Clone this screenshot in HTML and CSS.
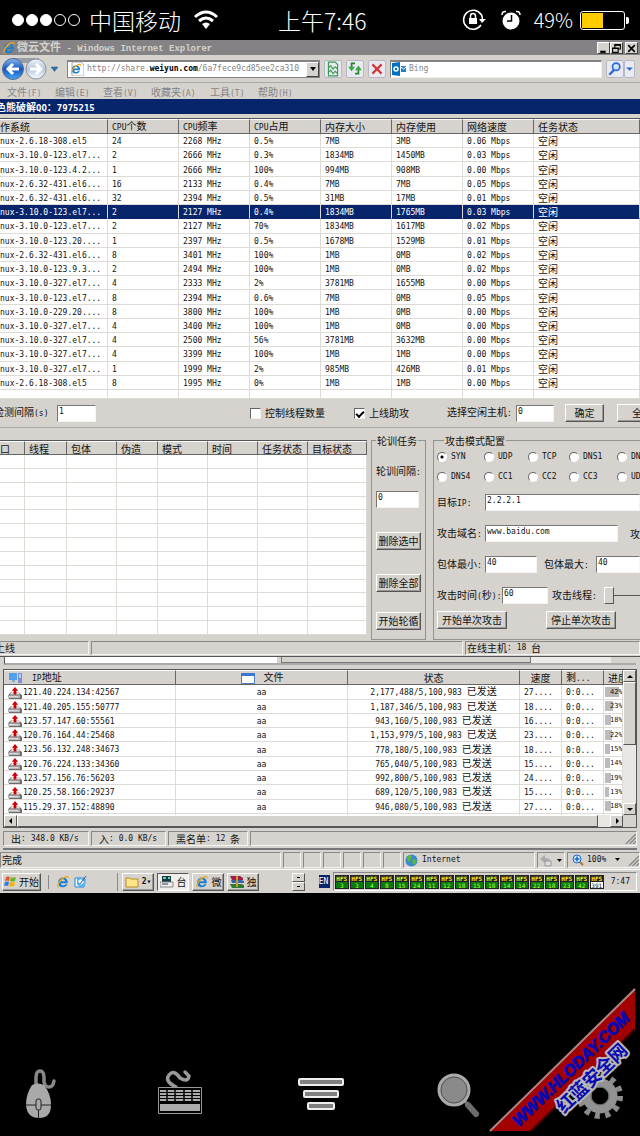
FILE: index.html
```html
<!DOCTYPE html>
<html lang="zh-CN">
<head>
<meta charset="utf-8">
<meta name="viewport" content="width=device-width">
<title>微云文件 - Windows Internet Explorer</title>
<link rel="stylesheet" href="styles.css">
</head>
<body>
<svg width="0" height="0" class="defs" aria-hidden="true">
  <symbol id="ie" viewBox="0 0 16 16">
    <path d="M13.500 9.500H5.600c.2 3 4.200 3.200 5 1.200h2.500C11 16 2.200 15 2.400 8.500 2.600 1 14.200 1 13.500 9.500zM5.700 7.200h4.800C10 4.300 6.100 4.400 5.700 7.200z" fill="#1c7fd6"/>
    <path d="M3.500 15C-1.500 14.500 3.500 3.500 10.500 1.500c4-1.200 5 .8 3.200 4C14.300 2 12 2 9 4 4 7.500 1 13.500 3.500 15z" fill="#e9a91c"/>
  </symbol>
  <symbol id="upload" viewBox="0 0 15 13">
    <path d="M0 9l3-3h9l3 3v4H1z" fill="#666"/><path d="M2 8l2-2h8l1 2z" fill="#e5e5e5"/><path d="M0 9h13v3H0z" fill="#b4b4b4"/><path d="M1 10h10v1H1z" fill="#e4e4e4"/>
    <path d="M7.500 0l3.500 4H9v4H6V4H4z" fill="#d00008"/>
  </symbol>
  <symbol id="grip" viewBox="0 0 12 12">
    <path d="M1 12L12 1M5 12l7-7M9 12l3-3" stroke="#888" stroke-width="1.500"/>
  </symbol>
</svg>

<header class="phone">
  <span class="signal"><i class="on"></i><i class="on"></i><i class="on"></i><i></i><i></i></span>
  <span class="carrier">中国移动</span>
  <svg class="wifi" width="26" height="20" viewBox="0 0 26 20"><g fill="none" stroke="#fff" stroke-width="3"><path d="M2 7Q13-3 24 7"/><path d="M6 11Q13 5 20 11"/></g><path d="M9 14q4-3 8 0l-4 5z" fill="#fff"/></svg>
  <span class="clock">上午7:46</span>
  <svg class="lock" width="24" height="22" viewBox="0 0 24 22"><path d="M19 5.500A9.500 9.500 0 1 0 19 16M19 5Q21 8 20 12" fill="none" stroke="#fff" stroke-width="1.500"/><path d="M17 10h7l-4 4z" fill="#fff"/><rect x="7" y="9" width="8" height="6" fill="#fff"/><path d="M8.500 9V7a2.500 2.500 0 0 1 5 0v2" fill="none" stroke="#fff" stroke-width="1.500"/></svg>
  <svg class="alarm" width="20" height="20" viewBox="0 0 20 20"><circle cx="10" cy="11" r="8.500" fill="#fff"/><path d="M1 5Q1 1 5 1.500M19 5Q19 1 15 1.500" stroke="#fff" stroke-width="1.500" fill="none"/><path d="M10.500 5v6H6" fill="none" stroke="#000" stroke-width="1.500"/></svg>
  <span class="percent">49%</span>
  <span class="battery"><i></i></span>
</header>

<main class="desktop">
  <div class="titlebar">
    <svg width="14" height="14"><use href="#ie"/></svg>
    <span class="caption">微云文件<i class="n"> - Windows Internet Explorer</i></span>
    <span class="winbtns">
      <button aria-label="最小化"><svg viewBox="0 0 10 10"><path d="M2 8h5" stroke="#000" stroke-width="2"/></svg></button>
      <button aria-label="还原"><svg viewBox="0 0 10 10"><path d="M3.500 4V1.500h5v4H7M1.500 4.500h5v4h-5z" stroke="#000" fill="none"/><path d="M3 2h6M1 5h6" stroke="#000"/></svg></button>
      <button class="close" aria-label="关闭"><svg viewBox="0 0 10 10"><path d="M2 2l6 6M8 2L2 8" stroke="#000" stroke-width="1.500"/></svg></button>
    </span>
  </div>

  <div class="toolbar">
    <svg class="nav" width="60" height="24" viewBox="0 0 60 24">
      <defs><linearGradient id="bl" x2="0" y2="1"><stop stop-color="#8ab8f0"/><stop offset=".5" stop-color="#1456bd"/><stop offset="1" stop-color="#47a9f5"/></linearGradient><linearGradient id="gl" x2="0" y2="1"><stop stop-color="#eef4fb"/><stop offset=".5" stop-color="#b8c8dc"/><stop offset="1" stop-color="#f5faff"/></linearGradient></defs>
      <path d="M11 1h26v5H11z" fill="#9a9ea6"/>
      <circle cx="11" cy="12" r="10.500" fill="url(#bl)" stroke="#526b91"/><circle cx="34" cy="12" r="10" fill="url(#gl)" stroke="#8a94a2"/>
      <path d="M17 12H6M11 7l-5 5 5 5" stroke="#fff" stroke-width="3" fill="none"/><path d="M28 12h11M34 7l5 5-5 5" stroke="#fff" stroke-width="3" fill="none"/>
      <path d="M49 10h7l-3.500 4.500z" fill="#2876b8" stroke="#32567a" stroke-width=".5"/>
    </svg>
    <div class="address">
      <svg width="14" height="14"><path d="M2 0h9l3 3v11H2z" fill="#fff" stroke="#aaa"/><use href="#ie" width="12" height="12" y="1"/></svg>
      <span class="n url">http://share.<b>weiyun.com</b>/6a7fece9cd85ee2ca310</span>
      <button class="drop" aria-label="地址列表"><svg viewBox="0 0 8 8"><path d="M1 2h6L4 6z"/></svg></button>
    </div>
    <button class="tool" aria-label="兼容性视图"><svg viewBox="0 0 14 14"><path d="M3 1h6l2 2v10H3zM3 6l2-2 2 3 2-2 2 2M3 10l2-2 2 3 2-2 2 2" fill="none" stroke="#3b9a4c"/></svg></button>
    <button class="tool" aria-label="刷新"><svg viewBox="0 0 14 14"><path d="M7 2H4v5M7 11h3V6" fill="none" stroke="#21872e" stroke-width="1.500"/><path d="M1 5h6L4 9zM7 8h6l-3-4z" fill="#3aa648"/></svg></button>
    <button class="tool" aria-label="停止"><svg viewBox="0 0 14 14"><path d="M3 3l8 8M11 3l-8 8" stroke="#cf3a3a" stroke-width="2"/></svg></button>
    <label class="search"><svg width="15" height="14" viewBox="0 0 15 14"><path d="M0 1l8-1v14l-8-1z" fill="#0072c6"/><circle cx="4" cy="7" r="2" fill="none" stroke="#fff" stroke-width="1.500"/><path d="M9 4h5v6H9z" fill="#1d7fce"/><path d="M9 5l2.500 2L14 5" fill="none" stroke="#fff"/></svg><input class="n" type="text" value="Bing" aria-label="搜索"></label>
    <button class="tool go" aria-label="搜索"><svg viewBox="0 0 14 14"><circle cx="8" cy="5" r="3.200" fill="#cfe6ff" stroke="#2a67d8" stroke-width="1.500"/><path d="M6 8l-4 4" stroke="#2a67d8" stroke-width="2"/></svg></button>
    <button class="tool more" aria-label="搜索选项"><svg viewBox="0 0 8 8"><path d="M1 3h6L4 6z" fill="#2a67d8"/></svg></button>
  </div>

  <nav class="menu">
    <a href="#">文件<i class="n">(F)</i></a><a href="#">编辑<i class="n">(E)</i></a><a href="#">查看<i class="n">(V)</i></a><a class="wide" href="#">收藏夹<i class="n">(A)</i></a><a href="#">工具<i class="n">(T)</i></a><a href="#">帮助<i class="n">(H)</i></a>
  </nav>

  <h1 class="apptitle">色熊破解<i class="n">QQ</i>：<i class="n">7975215</i></h1>

  <div class="hosts-wrap">
    <table class="grid hosts">
      <colgroup><col class="w108"><col class="w71"><col class="w71"><col class="w71"><col class="w71"><col class="w71"><col class="w71"><col></colgroup>
      <thead><tr><th>作系统</th><th><i class="n">CPU</i>个数</th><th><i class="n">CPU</i>频率</th><th><i class="n">CPU</i>占用</th><th>内存大小</th><th>内存使用</th><th>网络速度</th><th>任务状态</th></tr></thead>
      <tbody id="hosts"></tbody>
    </table>
  </div>

  <div class="options">
    <label for="gap">检测间隔<i class="n">(s)</i></label>
    <span><input id="gap" class="box gap" type="text" value="1"></span>
    <label class="check"><input type="checkbox">控制线程数量</label>
    <label class="check"><input type="checkbox" checked>上线助攻</label>
    <label for="idle">选择空闲主机<i class="n">:</i></label>
    <span><input id="idle" class="box idle" type="text" value="0"></span>
    <span><button class="btn ok">确定</button></span>
    <button class="btn all">全</button>
  </div>

  <div class="work">
    <table class="grid tasks">
      <colgroup><col class="w25"><col class="w42"><col class="w50"><col class="w41"><col class="w50"><col class="w50"><col class="w50"><col></colgroup>
      <thead><tr><th>口</th><th>线程</th><th>包体</th><th>伪造</th><th>模式</th><th>时间</th><th>任务状态</th><th>目标状态</th></tr></thead>
      <tbody id="tasks"></tbody>
    </table>
    <fieldset class="rotate">
      <legend>轮训任务</legend>
      <label for="rot">轮训间隔<i class="n">:</i></label>
      <input id="rot" class="box" type="text" value="0">
      <button class="btn">删除选中</button>
      <button class="btn">删除全部</button>
      <button class="btn">开始轮循</button>
    </fieldset>
    <fieldset class="attack">
      <legend>攻击模式配置</legend>
      <div class="radios n">
        <label><input type="radio" name="m" checked>SYN</label><label><input type="radio" name="m">UDP</label><label><input type="radio" name="m">TCP</label><label><input type="radio" name="m">DNS1</label><label><input type="radio" name="m">DN</label>
        <label><input type="radio" name="m">DNS4</label><label><input type="radio" name="m">CC1</label><label><input type="radio" name="m">CC2</label><label><input type="radio" name="m">CC3</label><label><input type="radio" name="m">UD</label>
      </div>
      <div class="line"><label for="ip">目标<i class="n">IP:</i></label><input id="ip" class="box fill" type="text" value="2.2.2.1"></div>
      <div class="line"><label for="dom">攻击域名<i class="n">:</i></label><input id="dom" class="box domain" type="text" value="www.baidu.com"><span>攻</span></div>
      <div class="line"><label for="min">包体最小<i class="n">:</i></label><input id="min" class="box min" type="text" value="40"><label class="second" for="max">包体最大<i class="n">:</i></label><input id="max" class="box fill" type="text" value="40"></div>
      <div class="line"><label class="long" for="sec">攻击时间<i class="n">(</i>秒<i class="n">):</i></label><input id="sec" class="box sec" type="text" value="60"><label class="second" for="thr">攻击线程<i class="n">:</i></label><input id="thr" type="range" value="0"></div>
      <div class="actions"><button class="btn">开始单次攻击</button><button class="btn">停止单次攻击</button></div>
    </fieldset>
  </div>

  <div class="status app-status"><span>上线</span><span></span><span>在线主机<i class="n">: 18 </i>台</span></div>

  <div class="behind"><i class="page"></i><i class="thumb"></i><i class="track"></i></div>

  <section class="transfers">
    <div class="list">
      <div class="clip">
        <table class="grid files">
          <colgroup><col class="w172"><col class="w172"><col class="w172"><col class="w42"><col class="w42"><col></colgroup>
          <thead><tr>
            <th class="ip"><svg width="14" height="12" viewBox="0 0 14 12"><path d="M0 1h8v7H0z" fill="#50a0f0"/><path d="M3 8h3v2H3z" fill="#8ab"/><path d="M1 10h7v1H1z" fill="#bcd"/><path d="M9 1h4v10H9z" fill="#7d8fd0"/><path d="M10 3h2M10 5h2" stroke="#fff"/></svg><i class="n">IP</i>地址</th>
            <th class="mid"><svg width="14" height="11" viewBox="0 0 14 11"><path d="M.5.500h13v10H.5z" fill="#fff" stroke="#4a7fc0"/><path d="M0 0h14v3H0z" fill="#3878d0"/></svg>文件</th>
            <th class="mid">状态</th><th class="mid">速度</th><th>剩<i class="n">...</i></th><th>进度</th></tr></thead>
          <tbody id="files"></tbody>
        </table>
      </div>
      <div class="vbar"><button class="sb" aria-label="上"><svg viewBox="0 0 8 8"><path d="M1 6h6L4 3z"/></svg></button><i class="thumb"></i><button class="sb" aria-label="下"><svg viewBox="0 0 8 8"><path d="M1 3h6L4 6z"/></svg></button></div>
      <div class="hbar"><button class="sb" aria-label="左"><svg viewBox="0 0 8 8"><path d="M5 1v6L2 4z"/></svg></button><i class="thumb"></i><button class="sb" aria-label="右"><svg viewBox="0 0 8 8"><path d="M3 1v6l3-3z"/></svg></button></div>
    </div>
    <div class="status list-status"><span>出<i class="n">: 348.0 KB/s</i></span><span>入<i class="n">: 0.0 KB/s</i></span><span>黑名单<i class="n">: 12 </i>条</span><span><svg class="grip" width="11" height="11"><use href="#grip"/></svg></span></div>
  </section>

  <div class="status ie-status">
    <span>完成</span><span></span><span></span><span></span><span></span><span></span><span></span>
    <span class="zone"><svg width="13" height="13" viewBox="0 0 13 13"><circle cx="6.500" cy="6.500" r="6" fill="#3987d5"/><path d="M2 3q3-3 5-1L6 6 3 8zM8 5l4 1-2 5-3-2z" fill="#5cb83c"/></svg><i class="n">Internet</i></span>
    <span class="safe"><svg width="24" height="13" viewBox="0 0 24 13"><path d="M1 5l5-4v3q5 0 6 5H9Q8 7 6 7v2z" fill="#aaa"/><path d="M6 7h6v5H6z" fill="#ddd" stroke="#999"/><path d="M18 5h5l-2.500 3z"/></svg></span>
    <span class="scale"><svg width="12" height="12" viewBox="0 0 12 12"><path d="M7 7l4 4" stroke="#a87832" stroke-width="2"/><circle cx="5" cy="5" r="4" fill="#cfe8ff" stroke="#1d6ac8"/><path d="M5 2.500v5M2.500 5h5" stroke="#1d6ac8" stroke-width="1.500"/></svg><i class="n">100%</i><svg class="caret" width="6" height="4"><path d="M0 0h5L2.500 3z"/></svg><svg class="grip" width="11" height="11"><use href="#grip"/></svg></span>
  </div>

  <footer class="taskbar">
    <button class="btn start"><svg width="13" height="12" viewBox="0 0 13 12"><path d="M2 1q2-1 4 0L5 5Q3 4 1 5z" fill="#e8532a"/><path d="M7 1q2 1 5 0l-1 4q-2 1-5 0z" fill="#6db52c"/><path d="M1 6q2-1 4 0l-1 4q-2-1-4 0z" fill="#2b7be0"/><path d="M6 6q2 1 5 0l-1 4q-2 1-5 0z" fill="#f3b60c"/></svg>开始</button>
    <div class="quick"><svg width="14" height="14"><use href="#ie"/></svg><svg width="14" height="14" viewBox="0 0 14 14"><path d="M1 3h9v9H1z" fill="#eaf5ff" stroke="#2888d8"/><path d="M3 2l4 1 5 1-1 7-5 2-3-4z" fill="#58b0ee"/><path d="M4 6l3-2 3 3-3 3z" fill="#fff"/><path d="M12 1L6 9" stroke="#2060a8"/></svg></div>
    <div class="tasksbtns">
      <button class="btn"><svg width="14" height="12" viewBox="0 0 14 12"><path d="M1 2h4l1 1h7v8H1z" fill="#ffe58a" stroke="#b58a22"/></svg><i class="n">2▾</i></button>
      <button class="btn pressed"><svg width="14" height="13" viewBox="0 0 14 13"><path d="M2 1h9v6H2z" fill="#123b40"/><path d="M3 2h3v2H3zM8 2h2v2H8z" fill="#6fc6bb"/><path d="M0 7h13v5H0z" fill="#eee" stroke="#888"/><path d="M2 9h6" stroke="#246"/></svg>台</button>
      <button class="btn"><svg width="14" height="14"><use href="#ie"/></svg>微</button>
      <button class="btn"><svg width="14" height="13" viewBox="0 0 14 13"><path d="M0 1h10l3 2v2H2z" fill="#9b1f46"/><path d="M1 5h10l3 1v2H2z" fill="#3366b0"/><path d="M0 9h11l3 1v3H2z" fill="#2d7a35"/><path d="M6 1h2v11H6z" fill="#c99a2e"/></svg>独</button>
    </div>
    <div class="spin"><button aria-label="上一组"></button><button aria-label="下一组"></button></div>
    <span class="lang n">EN</span>
    <div class="tray n"><span id="tray"></span><time>7:47</time></div>
  </footer>
</main>

<nav class="dock">
  <button aria-label="鼠标"><svg viewBox="0 0 44 60"><path d="M18 26V17q0-7 4-7t4 7v4q1 5 5 5t5-6" fill="none" stroke="#888" stroke-width="3.500" stroke-linecap="round"/><path d="M14 24q6-3 12 0 7 9 7 20 0 13-12 13T8 44q0-11 6-20z" fill="#a9a9a9"/><path d="M8 44h25M20.500 48v9" stroke="#222"/><rect x="18" y="38" width="5" height="11" rx="2" fill="#a9a9a9" stroke="#222"/></svg></button>
  <button aria-label="键盘"><svg viewBox="0 0 44 60"><path d="M18 26Q6 20 11 14T22 17Q30 22 31 15L27 11" fill="none" stroke="#999" stroke-width="3.500" stroke-linecap="round"/><path d="M.5 26.500h43v26H.5z" fill="#000" stroke="#999"/><path d="M2 30h40M2 33h40M2 36h40M2 39h40" stroke="#aaa" stroke-width="2.200"/><path d="M9 28v13M17 28v13M26 28v13M34 28v13" stroke="#000" stroke-width="1.500"/><path d="M2 43h40v7H2z" fill="#aaa"/></svg></button>
  <button aria-label="菜单"><svg viewBox="0 0 44 60"><g fill="#808080" stroke="#eee" stroke-width="2"><rect x="1" y="18" width="44" height="6" rx="1"/><rect x="6" y="30" width="34" height="6" rx="1"/><rect x="10" y="42" width="26" height="6" rx="1"/></g></svg></button>
  <button aria-label="搜索"><svg viewBox="0 0 44 60"><path d="M26 40l4 3" stroke="#777" stroke-width="3"/><path d="M30 44l8 9" stroke="#6d6d6d" stroke-width="6" stroke-linecap="round"/><circle cx="16" cy="29" r="15" fill="#8a8a8a" stroke="#aaa" stroke-width="3"/><circle cx="16" cy="29" r="13" fill="none" stroke="#555"/></svg></button>
  <button aria-label="设置"><svg viewBox="0 0 44 60"><circle cx="22" cy="35" r="20" fill="none" stroke="#8b8b8b" stroke-width="6" stroke-dasharray="5 5.470"/><circle cx="22" cy="35" r="13" fill="none" stroke="#929292" stroke-width="9"/><circle cx="22" cy="35" r="9" fill="none" stroke="#666"/></svg></button>
  <svg class="ribbon" width="151" height="148" viewBox="0 0 151 148">
    <path d="M146 0v42L41 143H0z" fill="#a30000"/><path d="M146 1L1 143" stroke="#a98888" stroke-width="2"/><path d="M146 41L42 143" stroke="#400" stroke-width="2"/>
    <text class="site" transform="translate(30 139) rotate(-44)">WWW.HLODAY.COM</text>
    <text class="brand" transform="translate(75 126) rotate(-44)">红蓝安全网</text>
  </svg>
</nav>
<script src="app.js"></script>
</body>
</html>
```
FILE: styles.css
```css
* { box-sizing: border-box; }
body { margin: 0; min-height: 100vh; display: flex; flex-direction: column; background: #000; color: #111; font: 10px/12px "Noto Sans CJK SC", sans-serif; overflow-x: hidden; }
button, input { font: inherit; color: inherit; padding: 0; margin: 0; border-radius: 0; }
i { font-style: normal; }
svg { display: block; flex: none; }
a { color: inherit; text-decoration: none; }
.defs { position: absolute; }
.n { font-family: "DejaVu Sans Mono", "Noto Sans CJK SC", monospace; font-size: 8px; white-space: pre; }

/* phone status bar */
.phone { height: 40px; display: flex; align-items: center; color: #fff; padding: 0 11px 0 12px; font-size: 23px; line-height: 40px; font-weight: 300; white-space: nowrap; }
.signal { display: flex; gap: 2px; width: 77px; }
.signal i { width: 12px; height: 12px; border: 1px solid #fff; border-radius: 50%; }
.signal .on { background: #fff; }
.wifi { margin-left: 12px; }
.clock { margin: 0 auto 0 59px; font-size: 23px; }
.alarm { margin-left: 15px; }
.percent { margin: 0 7px 0 13px; font-size: 20px; }
.battery { position: relative; width: 45px; height: 19px; margin-right: 4px; border: 1px solid #fff; border-radius: 3px; padding: 1px; }
.battery i { display: block; width: 21px; height: 15px; background: #ffcc00; }
.battery::after { content: ""; position: absolute; right: -5px; top: 5px; width: 3px; height: 7px; background: #fff; border-radius: 0 2px 2px 0; }

/* browser window */
.desktop { background: #d6d3ce; overflow: hidden; }
.titlebar { height: 15px; display: flex; align-items: center; gap: 1px; padding: 0 2px; background: #848284; color: #d6d3ce; font-weight: 700; font-size: 11px; line-height: 15px; }
.titlebar .n { font-family: "Liberation Mono", monospace; font-size: 9px; }
.winbtns { margin-left: auto; display: flex; }
.winbtns button { width: 13px; height: 12px; background: #d6d3ce; border: 1px solid; border-color: #fff #404040 #404040 #fff; }
.winbtns .close { margin-left: 2px; }
.toolbar { height: 28px; display: flex; align-items: center; padding: 0 5px 0 2px; border-bottom: 1px solid #aaa; }
.address { display: flex; align-items: center; width: 253px; height: 18px; margin: 0 4px 0 5px; padding: 0 0 0 2px; background: #fff; border: 1px solid #848284; border-top-width: 2px; color: #848284; }
.url { flex: 1; width: 0; margin-left: 3px; overflow: hidden; }
.url b { color: #000; }
.drop { width: 13px; height: 15px; background: #d6d3ce; border: 1px solid; border-color: #fff #404040 #404040 #fff; }
.drop svg, .sb svg { width: 8px; height: 8px; margin: auto; }
.tool { width: 18px; height: 18px; margin-right: 4px; background: #e9e9f2; border: 1px solid #b8b8c4; border-radius: 2px; }
.search { flex: 1; display: flex; align-items: center; gap: 2px; height: 18px; margin-right: 4px; padding-left: 1px; background: #fff; border: 1px solid #eee; border-top: 2px solid #848284; border-left-color: #848284; color: #848284; }
.search input { flex: 1; width: 0; border: 0; background: none; }
.go { margin-right: 0; }
.more { width: 11px; margin-right: 0; }
.menu { height: 16px; display: flex; padding-left: 7px; color: #848284; line-height: 18px; }
.menu a { width: 48px; white-space: nowrap; }
.menu .wide { width: 59px; }
.apptitle { margin: 0; height: 15px; line-height: 15px; font-size: 10px; color: #fff; background: #08246b; text-indent: -4px; }
.apptitle .n { font-size: 9px; }

/* list views */
.grid { border-collapse: separate; border-spacing: 0; table-layout: fixed; width: 100%; background: #fff; }
.grid th { height: 14px; padding: 0 0 0 4px; background: #d6d3ce; border-top: 1px solid #fff; border-right: 1px solid #666; border-bottom: 1px solid #666; text-align: left; font-weight: 400; line-height: 11px; white-space: nowrap; overflow: hidden; }
.grid td { padding: 0 0 0 4px; border-right: 1px solid #dedbd6; border-bottom: 1px solid #dedbd6; line-height: 11px; white-space: nowrap; overflow: hidden; }
.w25 { width: 25px; } .w41 { width: 41px; } .w42 { width: 42px; } .w50 { width: 50px; }
.w71 { width: 71px; } .w108 { width: 108px; } .w172 { width: 172px; }
.hosts-wrap { padding-top: 4px; }
.hosts { height: 281px; border-top: 1px solid #555; }
.hosts tbody tr:last-child td { height: 9px; line-height: 8px; }
.hosts td:first-child, .hosts th:first-child, .tasks th:first-child { padding-left: 0; }
.hosts .sel td { background: #08246b; color: #fff; border-bottom-color: #08246b; }

.options { height: 29px; display: grid; grid-template-columns: 57px 193px 104px 93px 69px 49px 52px 1fr; align-items: center; border-bottom: 1px solid #aaa; white-space: nowrap; }
.options label:first-child { text-indent: -6px; }
.options span { display: flex; }
.box { height: 17px; padding: 0 0 4px 1px; background: #fff; border: 1px solid; border-color: #777 #f4f4f4 #f4f4f4 #777; font-family: "DejaVu Sans Mono", monospace; font-size: 8px; min-width: 0; }
.gap { width: 39px; }
.idle { width: 38px; }
.btn { height: 18px; padding: 0; background: #d6d3ce; border: 1px solid; border-color: #fff #555 #555 #fff; box-shadow: inset -1px -1px #999; white-space: nowrap; line-height: 14px; }
.ok { width: 39px; }
.all { width: 40px; }
.check { display: flex; align-items: center; gap: 4px; }
.check input { appearance: none; width: 11px; height: 11px; background: #fff; border: 1px solid; border-color: #666 #eee #eee #666; }
.check input:checked::before { content: ""; display: block; width: 6px; height: 3px; margin: 2px 0 0 1px; border: solid #000; border-width: 0 0 2px 2px; transform: rotate(-45deg); }

.work { display: grid; grid-template-columns: 367px 55px 1fr; column-gap: 4px; padding: 6px 0 0; align-items: start; white-space: nowrap; }
.tasks { margin-top: 6px; height: 195px; border-top: 1px solid #555; }
fieldset { margin: 0; min-width: 0; border: 1px solid #929292; }
legend { height: 13px; line-height: 13px; padding: 0 1px; }
.rotate { display: grid; grid-template-rows: 26px 41px 42px 38px 18px; align-content: start; height: 206px; padding: 18px 4px 0; }
.rotate .box { width: 43px; }
.rotate label { height: 14px; }
.attack { height: 206px; padding: 0 0 0 3px; border-right: 0; margin-left: 3px; }
.attack legend { margin-left: 7px; }
.radios { display: grid; grid-template-columns: 47px 44px 41px 48px 1fr; grid-auto-rows: 20px; align-items: center; }
.radios label { display: flex; align-items: center; gap: 4px; }
.radios input { appearance: none; flex: none; width: 10px; height: 10px; border-radius: 50%; border: 1px solid; border-color: #666 #fff #fff #666; background: #fff; }
.radios input:checked { background: radial-gradient(#000 0 1px, #fff 2px); }
.line { display: flex; align-items: center; height: 31px; }
.line > label { width: 48px; }
.line .long { width: 65px; }
.line .second { width: 52px; }
.line span { margin-left: 12px; }
.line .fill { flex: 1; width: 0; }
.domain { width: 133px; }
.min { width: 52px; margin-right: 7px; }
.sec { width: 46px; margin-right: 4px; }
.line input[type=range] { appearance: none; flex: 1; width: 0; height: 17px; background: linear-gradient(#555, #555) 0 50% / 100% 1px no-repeat; }
.line input[type=range]::-webkit-slider-thumb { appearance: none; width: 10px; height: 17px; background: #d6d3ce; border: 1px solid; border-color: #fff #555 #555 #fff; }
.actions { display: flex; gap: 39px; }
.actions .btn { width: 70px; }

.status { display: grid; column-gap: 2px; height: 17px; padding: 1px 0; align-items: stretch; white-space: nowrap; }
.status > span { display: flex; align-items: center; border: 1px solid; border-color: #888 #f4f4f4 #f4f4f4 #888; padding-left: 1px; overflow: hidden; }
.status .grip { margin-left: auto; }
.app-status { grid-template-columns: 89px 372px 1fr; border-bottom: 1px solid #555; height: 17px; }
.app-status > span:first-child { border-left: 0; text-indent: -6px; }

.behind { display: flex; height: 8px; margin: 0 4px; border-left: 1px solid #555; border-bottom: 2px solid #aaa; }
.behind .page { width: 272px; background: #fff; }
.behind .thumb { width: 250px; margin-left: 4px; border: 1px solid #777; border-top: 0; }
.behind .track { width: 80px; background: #edebe8; }
.transfers { margin: 4px 3px 0; border-bottom: 2px solid #777; }
.list { display: grid; grid-template-columns: 1fr 13px; border: 1px solid #555; }
.clip { height: 145px; overflow: hidden; background: #fff; }
.files { height: 156px; }
.files .mid { text-align: center; padding: 0; }
.files th svg { display: inline-block; vertical-align: middle; margin: 0 9px 0 1px; }
.files td:first-child { padding-left: 4px; }
.files td svg { display: inline-block; vertical-align: middle; margin-right: 1px; }
.files td:last-child { padding-left: 1px; }
.bar { display: block; height: 10px; padding-left: 5px; line-height: 10px; font-size: 7px; }
.vbar, .hbar { display: flex; background: #e9e7e4; }
.vbar { flex-direction: column; }
.sb { flex: none; width: 13px; height: 12px; background: #d6d3ce; border: 1px solid; border-color: #fff #555 #555 #fff; }
.thumb { background: #d6d3ce; border: 1px solid; border-color: #fff #555 #555 #fff; }
.vbar .thumb { height: 63px; margin-bottom: auto; }
.hbar .thumb { flex: 1; margin-right: 12px; }
.list-status { grid-template-columns: 86px 75px 80px 1fr; height: 20px; padding: 3px 0 2px; }
.list-status > span { padding-left: 7px; }
.ie-status { grid-template-columns: 1fr repeat(6, 18px) 132px 28px 73px; height: 19px; padding: 2px 0 1px; }
.ie-status .zone { gap: 4px; }
.ie-status .scale { gap: 3px; padding-left: 4px; }
.scale .caret { margin-left: 6px; }

.taskbar { height: 24px; display: flex; align-items: center; border-top: 1px solid #fff; padding: 0 3px 0 2px; white-space: nowrap; }
.taskbar .btn { display: flex; align-items: center; justify-content: center; gap: 2px; }
.start { width: 39px; }
.quick { display: flex; gap: 4px; width: 69px; margin-left: 7px; padding-left: 7px; border-left: 1px solid #888; }
.tasksbtns { display: flex; gap: 3px; padding-left: 4px; border-left: 1px solid #888; }
.tasksbtns .btn { width: 32px; gap: 3px; }
.tasksbtns .n { font-weight: 700; }
.tasksbtns .pressed { background: #efeeec; border-color: #555 #fff #fff #555; box-shadow: none; }
.spin { display: grid; margin-left: auto; }
.spin button { width: 13px; height: 9px; background: #d6d3ce; border: 1px solid; border-color: #fff #555 #555 #fff; }
.spin button::before { content: ""; display: block; width: 3px; height: 1px; margin: 0 auto; background: #000; }
.lang { margin: 0 3px 0 14px; width: 11px; height: 13px; line-height: 13px; color: #fff; background: #08246b; }
.tray { display: flex; align-items: center; gap: 7px; height: 19px; padding: 0 6px 0 1px; border: 1px solid; border-color: #888 #fff #fff #888; }
#tray { display: flex; gap: 1px; }
.hfs { display: grid; grid-template-rows: 6px 7px; width: 14px; height: 14px; border: 1px solid #222; background: #087a10; color: #b9ff30; font-size: 6px; line-height: 7px; text-align: center; overflow: hidden; }
.hfs b { background: #222; color: #f4ee20; line-height: 6px; }
.hfs.full { background: #fff; color: #222; }

/* phone toolbar */
.dock { position: relative; display: flex; justify-content: space-between; margin-top: auto; padding: 0 18px 15px; }
.dock button { width: 44px; height: 60px; border: 0; background: none; }
.dock button svg { width: 44px; height: 60px; overflow: visible; }
.ribbon { position: absolute; right: 0; bottom: 0; }
.site { font: italic 700 16px "Liberation Sans", sans-serif; fill: #0a0ab0; stroke: #0a0ab0; }
.brand { font: 700 18px "Noto Sans CJK SC", sans-serif; fill: #0a0ab0; stroke: #b8b8b8; stroke-width: 4px; paint-order: stroke; stroke-linejoin: round; }
```
FILE: app.js
```javascript
const mixed = s => s.replace(/[\x20-\x7e]+/g, m => `<i class="n">${m}</i>`);
const row = (cells, cls = "") => `<tr class="${cls}">${cells.map(c => `<td>${c}</td>`).join("")}</tr>`;

const hosts = `2.6.18-308.el5|24|2268|0.5%|7MB|3MB|0.06
3.10.0-123.el7...|2|2666|0.3%|1834MB|1450MB|0.03
3.10.0-123.4.2...|1|2666|100%|994MB|908MB|0.00
2.6.32-431.el6...|16|2133|0.4%|7MB|7MB|0.05
2.6.32-431.el6...|32|2394|0.5%|31MB|17MB|0.01
3.10.0-123.el7...|2|2127|0.4%|1834MB|1765MB|0.03
3.10.0-123.el7...|2|2127|70%|1834MB|1617MB|0.02
3.10.0-123.20....|1|2397|0.5%|1678MB|1529MB|0.01
2.6.32-431.el6...|8|3401|100%|1MB|0MB|0.02
3.10.0-123.9.3...|2|2494|100%|1MB|0MB|0.02
3.10.0-327.el7...|4|2333|2%|3781MB|1655MB|0.00
3.10.0-123.el7...|8|2394|0.6%|7MB|0MB|0.05
3.10.0-229.20....|8|3800|100%|1MB|0MB|0.00
3.10.0-327.el7...|4|3400|100%|1MB|0MB|0.00
3.10.0-327.el7...|4|2500|56%|3781MB|3632MB|0.00
3.10.0-327.el7...|4|3399|100%|1MB|1MB|0.00
3.10.0-327.el7...|1|1999|2%|985MB|426MB|0.01
2.6.18-308.el5|8|1995|0%|1MB|1MB|0.00`.split("\n").map(l => l.split("|"));

document.getElementById("hosts").innerHTML = hosts.map((h, i) => row([
  "nux-" + h[0], h[1], h[2] + " MHz", h[3], h[4], h[5], h[6] + " Mbps", "空闲"
].map(mixed), i === 5 ? "sel" : "")).join("") + row(Array(8).fill("&nbsp;"));

document.getElementById("tasks").innerHTML = row(Array(8).fill("")).repeat(13);

const files = `121.40.224.134:42567|2,177,488|27|42
121.40.205.155:50777|1,187,346|18|23
123.57.147.60:55561|943,160|16|18
120.76.164.44:25468|1,153,979|23|22
123.56.132.248:34673|778,180|18|15
120.76.224.133:34360|765,040|15|14
123.57.156.76:56203|992,800|24|19
120.25.58.166:29237|689,120|15|13
115.29.37.152:48890|946,080|27|18`.split("\n").map(l => l.split("|"));

const icon = '<svg width="14" height="12"><use href="#upload"/></svg>';
const fileRow = (ip, sent, speed, left, bar) =>
  `<tr><td>${icon}${ip}</td><td class="mid">${sent ? mixed("aa") : ""}</td><td class="mid">${sent}</td><td>${speed}</td><td>${left}</td><td>${bar}</td></tr>`;
document.getElementById("files").innerHTML = files.map(f => fileRow(
  mixed(f[0]), mixed(f[1] + "/5,100,983 已发送"), mixed(f[2] + "...."), mixed("0:0..."),
  `<span class="n bar" style="background:linear-gradient(90deg,#bbb ${Math.round(f[3] / 3)}px,#fff 0)">${f[3]}%</span>`
)).join("") + fileRow("", "", "", "", "");

document.getElementById("tray").innerHTML =
  [3, 3, 4, 8, 15, 24, 11, 12, 18, 15, 18, 14, 14, 22, 18, 23, 42, 391]
    .map(v => `<span class="hfs${v > 99 ? " full" : ""}"><b>HFS</b>${v}</span>`).join("");
```
